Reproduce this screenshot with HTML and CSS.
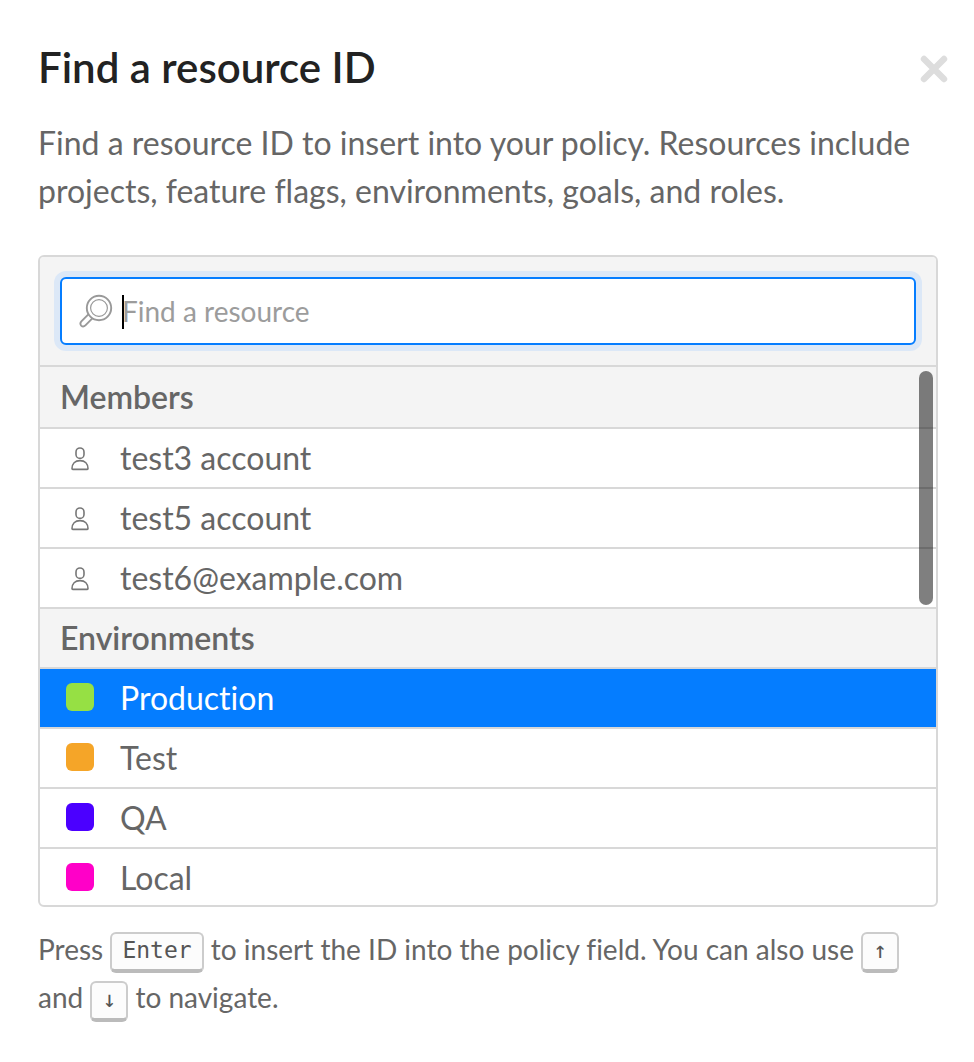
FILE: index.html
```html
<!DOCTYPE html>
<html lang="en">
<head>
<meta charset="utf-8">
<title>Find a resource ID</title>
<link rel="stylesheet" href="styles.css">
</head>
<body>
<main class="modal">
  <header class="modal-header">
    <h1 class="modal-title">Find a resource ID</h1>
    <button class="close" type="button" aria-label="Close">
      <svg width="30" height="30" viewBox="0 0 30 30" fill="none" stroke="currentColor" stroke-width="6.4" stroke-linecap="round"><path d="M5 5 25 25M25 5 5 25"/></svg>
    </button>
  </header>
  <p class="intro">Find a resource ID to insert into your policy. Resources include projects, feature flags, environments, goals, and roles.</p>

  <section class="finder">
    <div class="search-bar">
      <label class="search">
        <svg class="search-icon" width="34" height="34" viewBox="0 0 34 34" fill="none" stroke="currentColor"><circle cx="20" cy="14" r="12.2" stroke-width="1.9"/><circle cx="20" cy="14" r="8.4" stroke-width="1.2"/><path stroke-width="1.9" stroke-linejoin="round" d="M9.6 20.2 2.6 27.2C1.2 28.6 1.2 30.4 2.2 31.6 3.4 32.8 5.2 32.6 6.4 31.4L13.6 24.2"/></svg>
        <span class="caret"></span>
        <input class="search-input" type="text" placeholder="Find a resource" aria-label="Find a resource">
      </label>
    </div>
    <div class="results">
      <h2 class="group group-first">Members</h2>
      <ul class="options">
        <li class="option"><svg class="person" width="20" height="24" viewBox="0 0 20 24"><rect x="6" y="1" width="8" height="10.4" rx="4"/><path d="M2 21.6C2 16.8 5 13.6 10 13.6S18 16.8 18 21.6Q18 22.4 17.2 22.4H2.8Q2 22.4 2 21.6Z"/></svg>test3 account</li>
        <li class="option"><svg class="person" width="20" height="24" viewBox="0 0 20 24"><rect x="6" y="1" width="8" height="10.4" rx="4"/><path d="M2 21.6C2 16.8 5 13.6 10 13.6S18 16.8 18 21.6Q18 22.4 17.2 22.4H2.8Q2 22.4 2 21.6Z"/></svg>test5 account</li>
        <li class="option"><svg class="person" width="20" height="24" viewBox="0 0 20 24"><rect x="6" y="1" width="8" height="10.4" rx="4"/><path d="M2 21.6C2 16.8 5 13.6 10 13.6S18 16.8 18 21.6Q18 22.4 17.2 22.4H2.8Q2 22.4 2 21.6Z"/></svg>test6@example.com</li>
      </ul>
      <h2 class="group">Environments</h2>
      <ul class="options">
        <li class="option selected"><span class="swatch green"></span>Production</li>
        <li class="option"><span class="swatch orange"></span>Test</li>
        <li class="option"><span class="swatch purple"></span>QA</li>
        <li class="option option-last"><span class="swatch pink"></span>Local</li>
      </ul>
      <div class="scroll-thumb"></div>
    </div>
  </section>

  <p class="hint">Press <kbd class="key">Enter</kbd> to insert the ID into the policy field. You can also use <kbd class="key">↑</kbd> and <kbd class="key">↓</kbd> to navigate.</p>
</main>
</body>
</html>
```
FILE: styles.css
```css
* { box-sizing: border-box; }
body {
  margin: 0;
  background: #fff;
  color: #666;
  font-family: Lato, "Open Sans", sans-serif;
  font-variant-ligatures: none;
}
.modal { padding: 39px 36px 32px 38px; }
.modal-header {
  display: flex;
  align-items: center;
  justify-content: space-between;
  margin-right: -11px;
}
.modal-title {
  margin: 0;
  color: #222;
  font-size: 42px;
  font-weight: 600;
  line-height: 56px;
}
.close {
  display: flex;
  padding: 4px 0 0;
  border: 0;
  background: none;
  color: #ddd;
}
.intro {
  margin: 24px 0 40px;
  font-size: 32px;
  line-height: 48px;
}
.finder {
  border: 2px solid #d8d8d8;
  border-radius: 6px;
  overflow: hidden;
}
.search-bar {
  padding: 20px;
  background: #f4f4f4;
  border-bottom: 2px solid #d8d8d8;
}
.search {
  position: relative;
  display: flex;
  align-items: center;
  gap: 9px;
  height: 68px;
  padding: 0 17px;
  border: 2px solid #057dff;
  border-radius: 6px;
  background: #fff;
  box-shadow: 0 0 0 6px #dce8f7;
}
.search-icon { flex: none; color: #999; }
.search-input {
  flex: 1;
  min-width: 0;
  padding: 0;
  border: 0;
  outline: 0;
  background: none;
  color: #666;
  font: inherit;
  font-size: 28px;
}
.search-input::placeholder { color: #9c9c9c; }
.caret {
  position: absolute;
  left: 60px;
  top: 16px;
  width: 2px;
  height: 34px;
  background: #000;
}
.results { position: relative; }
.group {
  height: 60px;
  margin: 0;
  padding: 0 20px;
  border-bottom: 2px solid #d8d8d8;
  background: #f4f4f4;
  font-size: 32px;
  font-weight: 600;
  line-height: 58px;
}
.group-first { height: 62px; line-height: 60px; }
.options {
  margin: 0;
  padding: 0;
  list-style: none;
}
.option {
  display: flex;
  align-items: center;
  height: 60px;
  padding: 0 26px;
  gap: 26px;
  border-bottom: 2px solid #d8d8d8;
  font-size: 32px;
  line-height: 58px;
}
.option-last { height: 58px; margin-bottom: -2px; border-bottom: 0; }
.selected { background: #057dff; background-clip: padding-box; color: #fff; }
.person {
  flex: none;
  width: 28px;
  margin-top: 2px;
  fill: none;
  stroke: #777;
  stroke-width: 1.6;
}
.swatch {
  flex: none;
  width: 28px;
  height: 28px;
  margin-bottom: 2px;
  border-radius: 6px;
}
.green { background: #96e044; }
.orange { background: #f5a528; }
.purple { background: #4b00ff; }
.pink { background: #ff00c8; }
.scroll-thumb {
  position: absolute;
  top: 4px;
  right: 3px;
  width: 14px;
  height: 234px;
  border-radius: 7px;
  background: rgba(0, 0, 0, 0.5);
}
.hint {
  margin: 18px 0 0;
  font-size: 28px;
  line-height: 48px;
}
.key {
  display: inline-block;
  height: 41px;
  padding: 0 10px;
  border: 2px solid #ccc;
  border-bottom: 4px solid #bbb;
  border-radius: 6px;
  background: #fcfcfc;
  color: #555;
  font-family: "DejaVu Sans Mono", monospace;
  font-size: 23px;
  line-height: 32px;
  vertical-align: middle;
}
```
